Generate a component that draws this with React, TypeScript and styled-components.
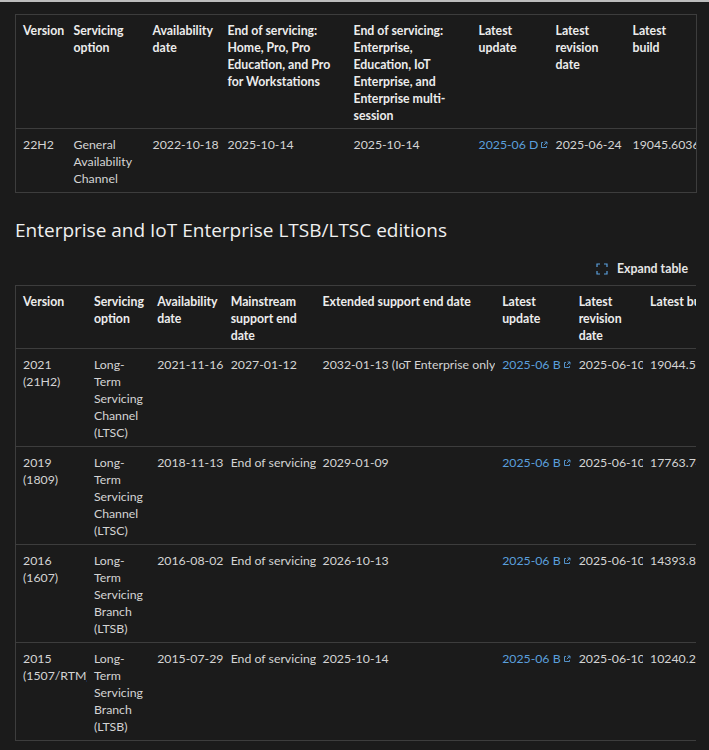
import React from "react";
import styled, { createGlobalStyle } from "styled-components";

const Global = createGlobalStyle`
  html, body { margin: 0; background: #1b1b1b; }
  body { border-top: 2px solid #bdbdbd; font-family: "Lato", "Open Sans", sans-serif; color: #dadada; }
`;

const Page = styled.div`
  padding: 12px 13px 0 15px;
  height: 746px;
  overflow: hidden;
`;

const Scroll = styled.div`
  overflow: hidden;
`;

const Table = styled.table<{ $w: number }>`
  border-collapse: collapse;
  table-layout: fixed;
  width: ${(p) => p.$w}px;
  font-size: 12.3px;
  line-height: 17px;
  border: 1px solid #3d3d3d;
  border-right: ${(p) => (p.$w > 690 ? "none" : "1px solid #3d3d3d")};
`;

const Th = styled.th`
  text-align: left;
  vertical-align: top;
  font-weight: 700;
  color: #ececec;
  padding: 7px 6px 4px 7px;
  border-bottom: 1px solid #3d3d3d;
`;

const Td = styled.td<{ $nw?: boolean }>`
  vertical-align: top;
  padding: 7px 5px 5px 7px;
  border-bottom: 1px solid #3d3d3d;
  color: #d4d4d4;
  white-space: ${(p) => (p.$nw ? "nowrap" : "normal")};
  overflow: hidden;
`;

const Link = styled.a`
  color: #5a9fdc;
  text-decoration: none;
  white-space: nowrap;
`;

const Ext = () => (
  <svg width="8" height="8" viewBox="0 0 8 8" style={{ marginLeft: 2 }} fill="none" stroke="#5a9fdc" strokeWidth="0.9">
    <path d="M3 1.5H1.5v5h5V5M4.5 1h2.5v2.5M7 1L3.8 4.2" />
  </svg>
);

const Heading = styled.h2`
  font-family: "Open Sans", sans-serif;
  font-weight: 400;
  font-size: 19px;
  color: #f0f0f0;
  margin: 24px 0 0;
`;

const ExpandBar = styled.div`
  display: flex;
  justify-content: flex-end;
  align-items: center;
  gap: 9px;
  padding: 18px 8px 9px 0;
  font-size: 12.3px;
  color: #e6e6e6;
  font-weight: 700;
`;

const Sup = styled.sup`
  font-size: 8px;
  line-height: 0;
`;

const w1 = [51, 79, 75, 126, 125, 77, 77, 71];
const w2 = [70, 62, 72, 90, 176, 75, 70, 90];

const rows2 = [
  ["2021 (21H2)", "Long-Term Servicing Channel (LTSC)", "2021-11-16", "2027-01-12", "2032-01-13 (IoT Enterprise only)", "2025-06-10", "19044.5965"],
  ["2019 (1809)", "Long-Term Servicing Channel (LTSC)", "2018-11-13", "End of servicing", "2029-01-09", "2025-06-10", "17763.7434"],
  ["2016 (1607)", "Long-Term Servicing Branch (LTSB)", "2016-08-02", "End of servicing", "2026-10-13", "2025-06-10", "14393.8148"],
  ["2015 (1507/RTM)", "Long-Term Servicing Branch (LTSB)", "2015-07-29", "End of servicing", "2025-10-14", "2025-06-10", "10240.21034"],
];

export default function App() {
  return (
    <Page>
      <Global />
      <Table $w={681}>
        <colgroup>{w1.map((w, i) => <col key={i} style={{ width: w }} />)}</colgroup>
        <thead>
          <tr>
            <Th>Version</Th>
            <Th>Servicing option</Th>
            <Th>Availability date</Th>
            <Th>End of servicing: Home, Pro, Pro Education, and Pro for Workstations</Th>
            <Th>End of servicing: Enterprise, Education, IoT Enterprise, and Enterprise multi-session</Th>
            <Th>Latest update</Th>
            <Th>Latest revision date</Th>
            <Th>Latest build</Th>
          </tr>
        </thead>
        <tbody>
          <tr>
            <Td>22H2</Td>
            <Td>General Availability Channel</Td>
            <Td $nw>2022-10-18</Td>
            <Td $nw>2025-10-14</Td>
            <Td $nw>2025-10-14</Td>
            <Td $nw><Link>2025-06 D<Ext /></Link></Td>
            <Td $nw>2025-06-24</Td>
            <Td $nw>19045.6036</Td>
          </tr>
        </tbody>
      </Table>
      <Heading>Enterprise and IoT Enterprise LTSB/LTSC editions</Heading>
      <ExpandBar>
        <svg width="12" height="12" viewBox="0 0 12 12" fill="none" stroke="#5a9fdc" strokeWidth="1.2">
          <path d="M1 4V1h3M8 1h3v3M11 8v3H8M4 11H1V8" />
        </svg>
        Expand table
      </ExpandBar>
      <Scroll>
        <Table $w={720}>
          <colgroup>{w2.map((w, i) => <col key={i} style={{ width: w }} />)}</colgroup>
          <thead>
            <tr>
              <Th>Version</Th>
              <Th>Servicing option</Th>
              <Th>Availability date</Th>
              <Th>Mainstream support end date</Th>
              <Th>Extended support end date</Th>
              <Th>Latest update</Th>
              <Th>Latest revision date</Th>
              <Th style={{ whiteSpace: "nowrap" }}>Latest build</Th>
            </tr>
          </thead>
          <tbody>
            {rows2.map((r, i) => (
              <tr key={i}>
                <Td>{r[0]}</Td>
                <Td>{r[1]}</Td>
                <Td $nw>{r[2]}</Td>
                <Td $nw>{r[3]}</Td>
                <Td $nw>{r[4]}{i === 0 && <Sup>1</Sup>}</Td>
                <Td $nw><Link>2025-06 B<Ext /></Link></Td>
                <Td $nw>{r[5]}</Td>
                <Td $nw>{r[6]}</Td>
              </tr>
            ))}
          </tbody>
        </Table>
      </Scroll>
    </Page>
  );
}
